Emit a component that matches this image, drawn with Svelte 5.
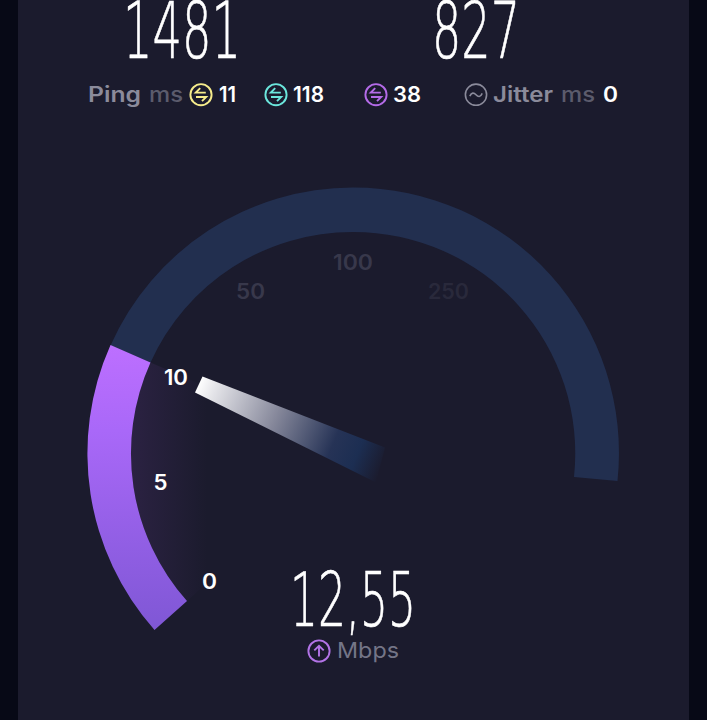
<script>
	const ticks = [
		{ value: '0', x: 202, y: 589, w: 15, fill: '#ffffff' },
		{ value: '5', x: 153.5, y: 490, w: 14, fill: '#ffffff' },
		{ value: '10', x: 164, y: 384.5, w: 24, fill: '#ffffff' },
		{ value: '50', x: 236, y: 299, w: 29, fill: '#38384b' },
		{ value: '100', x: 333, y: 270, w: 40, fill: '#38384b' },
		{ value: '250', x: 428, y: 299, w: 41, fill: '#29293b' }
	];
</script>

{#snippet label(text, width, kind)}
	<svg class="label {kind}" {width} height="30">
		<text x="0" y="22" textLength={width} lengthAdjust="spacingAndGlyphs">{text}</text>
	</svg>
{/snippet}

{#snippet digits(text, width, size)}
	<svg class="digits" {width} height="76" font-size={size}>
		<text x="0" y="60" textLength={width} lengthAdjust="spacingAndGlyphs">{text}</text>
	</svg>
{/snippet}

{#snippet pingIcon(color)}
	<svg class="icon" width="24" height="24" viewBox="0 0 24 24" stroke={color}>
		<circle cx="12" cy="11.7" r="10.6" />
		<path d="M16.8 9.6H6.8L11.2 5.2M7 14H17.200L13 18.200" />
	</svg>
{/snippet}

<main>
	<section class="speeds">
		<div class="speed download">{@render digits('1481', 118, 78)}</div>
		<div class="speed upload">{@render digits('827', 88, 78)}</div>
	</section>

	<section class="stats">
		<div class="stat">
			{@render label('Ping', 53, 'name')}
			<span class="unit">{@render label('ms', 34, 'dim')}</span>
			<span class="ping">{@render pingIcon('#f6ec8b')}</span>
			<span class="first">{@render label('11', 17, 'value')}</span>
		</div>
		<div class="stat down">
			{@render pingIcon('#6be6dc')}
			<span class="num">{@render label('118', 31, 'value')}</span>
		</div>
		<div class="stat up">
			{@render pingIcon('#b46be8')}
			<span class="num">{@render label('38', 28, 'value')}</span>
		</div>
		<div class="stat jitter">
			<svg class="icon thin" width="24" height="24" viewBox="0 0 24 24" stroke="#8b8b9b">
				<circle cx="12" cy="11.7" r="10.6" />
				<path d="M5.8 13.2c1.800-4 4-3.800 6.200-1.400s4.400 2.600 6.200-1.400" />
			</svg>
			<span class="num">{@render label('Jitter', 60, 'name')}</span>
			<span class="unit">{@render label('ms', 34, 'dim')}</span>
			<span class="unit">{@render label('0', 15, 'value')}</span>
		</div>
	</section>

	<section class="gauge">
		<svg class="dial" width="671" height="600" viewBox="18 120 671 600">
			<defs>
				<linearGradient id="fill" x1="0" y1="345" x2="0" y2="630" gradientUnits="userSpaceOnUse">
					<stop offset="0" stop-color="#bd6fff" />
					<stop offset="0.3" stop-color="#a968f8" />
					<stop offset="1" stop-color="#7f57d5" />
				</linearGradient>
				<linearGradient id="glow" x1="131" y1="0" x2="207" y2="0" gradientUnits="userSpaceOnUse">
					<stop offset="0" stop-color="#8d4bc4" stop-opacity="0.14" />
					<stop offset="1" stop-color="#8d4bc4" stop-opacity="0" />
				</linearGradient>
				<linearGradient id="needle" x1="198" y1="384" x2="384" y2="464" gradientUnits="userSpaceOnUse">
					<stop offset="0" stop-color="#ffffff" />
					<stop offset="0.08" stop-color="#e6e6ea" />
					<stop offset="0.42" stop-color="#85879a" />
					<stop offset="0.73" stop-color="#263356" />
					<stop offset="0.86" stop-color="#1c2e52" />
					<stop offset="1" stop-color="#1b1b2d" />
				</linearGradient>
			</defs>
			<path
				fill="#222f4f"
				d="M110.5 345.5A265.5 265.5 0 0 1 353 187.5A265.5 265.5 0 0 1 617.5 481L574 477A221.5 221.5 0 0 0 353 232A221.5 221.5 0 0 0 150.5 362.5Z"
			/>
			<path fill="url(#glow)" d="M150.5 362.5A222 222 0 0 0 187 601L207 583V387Z" />
			<path
				fill="url(#fill)"
				d="M110.5 345A266 266 0 0 0 154.5 630L187 601A222 222 0 0 1 150.5 362.5Z"
			/>
			<path fill="url(#needle)" d="M202.5 376.5L385 447.5L376 482.5L195 392.5Z" />
			{#each ticks as tick}
				<text
					class="tick"
					x={tick.x}
					y={tick.y}
					fill={tick.fill}
					textLength={tick.w}
					lengthAdjust="spacingAndGlyphs">{tick.value}</text
				>
			{/each}
		</svg>
		<div class="readout">
			{@render digits('12,55', 126, 75)}
			<div class="mbps">
				<svg class="icon" width="24" height="24" viewBox="0 0 24 24" stroke="#b273e6">
					<circle cx="12" cy="12" r="10.6" />
					<path d="M12 17.5V7M7.3 11.4L12 6.800l4.700 4.600" />
				</svg>
				{@render label('Mbps', 62, 'mb')}
			</div>
		</div>
	</section>
</main>

<style>
	:global(body) {
		margin: 0;
		background: #070916;
		overflow: hidden;
	}
	main {
		width: 671px;
		height: 720px;
		margin-left: 18px;
		background: #1b1b2d;
		overflow: hidden;
		font-family: Inter, 'Open Sans', sans-serif;
	}
	svg {
		display: block;
		overflow: visible;
		flex: none;
	}
	.speeds {
		display: flex;
		height: 80px;
	}
	.speed {
		margin-top: -2px;
	}
	.download {
		margin-left: 105px;
	}
	.upload {
		margin-left: 190.5px;
	}
	.digits {
		font-family: 'DejaVu Sans', sans-serif;
		font-weight: 200;
		fill: #ffffff;
		stroke: #ffffff;
		stroke-width: 0.7;
	}
	.stats {
		display: flex;
		height: 30px;
		padding-left: 70px;
	}
	.stat {
		display: flex;
		align-items: center;
	}
	.down {
		margin-left: 27.5px;
	}
	.up {
		margin-left: 40px;
	}
	.jitter {
		margin-left: 43px;
	}
	.unit {
		margin-left: 8px;
	}
	.ping {
		margin-left: 5.5px;
	}
	.first {
		margin-left: 6.5px;
	}
	.num {
		margin-left: 5px;
	}
	.icon {
		fill: none;
		stroke-width: 1.9;
	}
	.thin {
		stroke-width: 1.6;
	}
	.label {
		font-size: 21px;
		font-weight: 600;
	}
	.name {
		fill: #8b8b9b;
	}
	.dim {
		fill: #5b5b6c;
		font-weight: 500;
	}
	.value {
		fill: #ffffff;
	}
	.mb {
		fill: #747587;
		font-size: 22px;
		font-weight: 400;
	}
	.gauge {
		display: grid;
		margin-top: 10px;
	}
	.dial,
	.readout {
		grid-area: 1 / 1;
	}
	.tick {
		font-size: 21px;
		font-weight: 600;
	}
	.readout {
		padding-top: 445.5px;
		padding-left: 272px;
	}
	.mbps {
		display: flex;
		align-items: center;
		gap: 6px;
		margin-top: -5.5px;
		padding-left: 17px;
	}
</style>
